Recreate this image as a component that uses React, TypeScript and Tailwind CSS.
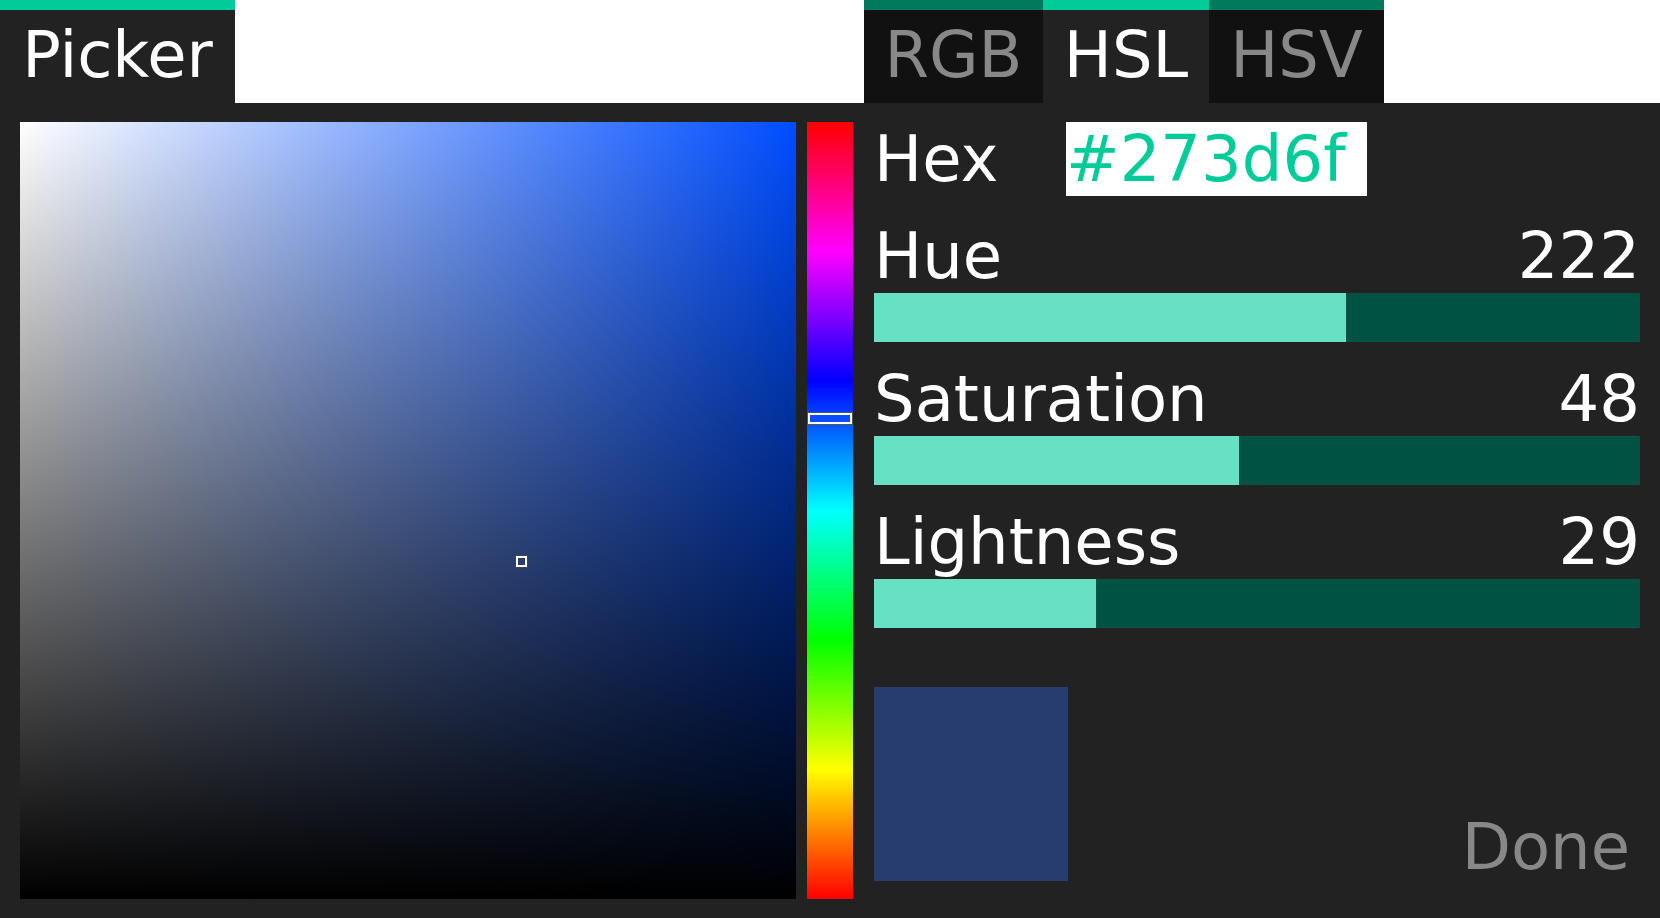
import React from "react";

const Tab = ({ label, active, width }: { label: string; active: boolean; width: string }) => (
  <div className={`flex flex-col ${width}`}>
    <div className={`h-[10px] ${active ? "bg-[#00cc99]" : "bg-[#007a5c]"}`} />
    <div
      className={`h-[93px] pt-[8px] text-center text-[64px] leading-[74px] ${
        active ? "bg-[#222222] text-white" : "bg-[#111111] text-[#888888]"
      }`}
    >
      {label}
    </div>
  </div>
);

const Slider = ({ label, value, pct, mt }: { label: string; value: string; pct: number; mt: string }) => (
  <div className={`flex flex-col ${mt}`}>
    <div className="flex h-[74px] justify-between text-[64px] leading-[74px] text-white">
      <span>{label}</span>
      <span>{value}</span>
    </div>
    <div className="h-[49px] bg-[#005242]">
      <div className="h-full bg-[#68e0c4]" style={{ width: `${pct}%` }} />
    </div>
  </div>
);

export default function App() {
  return (
    <div className="flex h-[918px] w-[1660px] flex-col overflow-hidden bg-white font-['DejaVu_Sans',sans-serif]">
      <div className="flex h-[103px]">
        <Tab label="Picker" active width="w-[235px]" />
        <div className="w-[629px]" />
        <Tab label="RGB" active={false} width="w-[179px]" />
        <Tab label="HSL" active width="w-[166px]" />
        <Tab label="HSV" active={false} width="w-[175px]" />
      </div>
      <div className="flex flex-1 bg-[#222222] pl-[20px] pr-[20px] pt-[19px]">
        <div className="relative h-[777px] w-[776px] bg-[#004dff]">
          <div className="absolute inset-0 bg-gradient-to-r from-white to-transparent" />
          <div className="absolute inset-0 bg-gradient-to-t from-black to-transparent" />
          <div className="absolute left-[496px] top-[434px] h-[11px] w-[11px] border-2 border-white bg-[#273d6f] outline outline-1 outline-[#444444]" />
        </div>
        <div className="relative ml-[11px] h-[777px] w-[46px] bg-[linear-gradient(to_bottom,#ff0000,#ff00ff,#0000ff,#00ffff,#00ff00,#ffff00,#ff0000)]">
          <div className="absolute left-[1px] top-[291px] h-[11px] w-[44px] border-2 border-white bg-[#0a4dff] outline outline-1 outline-[#555555]" />
        </div>
        <div className="ml-[21px] flex flex-1 flex-col">
          <div className="flex h-[74px] text-[64px] leading-[74px]">
            <span className="w-[192px] text-white">Hex</span>
            <span className="w-[301px] bg-white text-[#00cc99]">#273d6f</span>
          </div>
          <Slider label="Hue" value="222" pct={61.67} mt="mt-[23px]" />
          <Slider label="Saturation" value="48" pct={47.6} mt="mt-[20px]" />
          <Slider label="Lightness" value="29" pct={29} mt="mt-[20px]" />
          <div className="mt-[59px] flex justify-between">
            <div className="h-[194px] w-[194px] bg-[#273d6f]" />
            <div className="mt-[123px] h-[74px] pr-[10px] text-[64px] leading-[74px] text-[#888888]">Done</div>
          </div>
        </div>
      </div>
    </div>
  );
}
